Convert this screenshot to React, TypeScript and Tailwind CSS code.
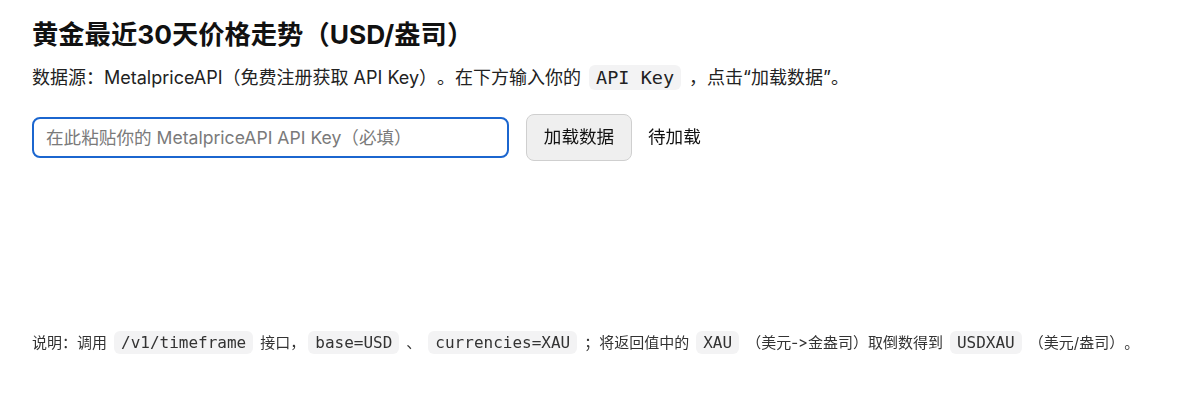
import React, { useState } from 'react';

const font = "font-['Inter','Noto_Sans_CJK_SC',sans-serif] [font-feature-settings:'calt'_0] [text-spacing-trim:space-all]";
const mono = "font-['DejaVu_Sans_Mono','Noto_Sans_CJK_SC',monospace]";

const Code: React.FC<{ children: React.ReactNode; small?: boolean; className?: string }> = ({
  children,
  small,
  className = '',
}) => (
  <code
    className={`${mono} bg-[#f3f3f4] rounded-md ${
      small ? 'text-[16px] px-[7px] py-[2px]' : 'text-[18.5px] px-[7px] py-[2px] mx-[8px]'
    } ${className}`}
  >
    {children}
  </code>
);

export default function App() {
  const [apiKey, setApiKey] = useState('');

  return (
    <div className={`${font} bg-white min-h-[420px] px-8 pt-[18px] text-[#1d1d1f]`}>
      {/* Title */}
      <h1 className="text-[26.3px] font-bold leading-[34px] text-[#111]">
        黄金最近30天价格走势（USD/盎司）
      </h1>

      {/* Source note */}
      <p className="mt-[12px] text-[18px] leading-[28px] text-[#222]">
        数据源：MetalpriceAPI（免费注册获取 API Key）。在下方输入你的<Code>API Key</Code>，点击“加载数据”。
      </p>

      {/* Controls */}
      <div className="mt-[22px] flex items-center">
        <input
          autoFocus
          value={apiKey}
          onChange={(e) => setApiKey(e.target.value)}
          placeholder="在此粘贴你的 MetalpriceAPI API Key（必填）"
          className="w-[477px] h-[41px] px-3 border-2 border-[#1b66cf] rounded-lg text-[17.6px] text-[#222] placeholder-[#7a7a7a] outline-none"
        />
        <button
          type="button"
          className="ml-[17px] w-[106px] h-[47px] bg-[#efefef] border border-[#cfcfcf] rounded-lg text-[17.6px] text-[#111]"
        >
          加载数据
        </button>
        <span className="ml-4 text-[17.6px] text-[#111]">待加载</span>
      </div>

      {/* Chart area (empty until loaded) */}
      <div className="h-[170px]" />

      {/* Footnote */}
      <p className="text-[15px] leading-[24px] text-[#333]">
        说明：调用<Code small className="mx-[7px]">/v1/timeframe</Code>接口，
        <Code small className="ml-[3px] mr-[7px]">base=USD</Code>、
        <Code small className="mx-[7px]">currencies=XAU</Code>；将返回值中的
        <Code small className="mx-[7px]">XAU</Code>（美元-&gt;金盎司）取倒数得到
        <Code small className="mx-[7px]">USDXAU</Code>（美元/盎司）。
      </p>
    </div>
  );
}
